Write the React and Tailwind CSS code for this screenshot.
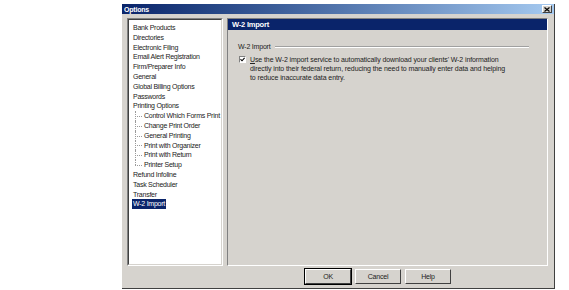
import React from "react";

const items = [
  { label: "Bank Products" },
  { label: "Directories" },
  { label: "Electronic Filing" },
  { label: "Email Alert Registration" },
  { label: "Firm/Preparer Info" },
  { label: "General" },
  { label: "Global Billing Options" },
  { label: "Passwords" },
  { label: "Printing Options" },
  { label: "Control Which Forms Print", child: true },
  { label: "Change Print Order", child: true },
  { label: "General Printing", child: true },
  { label: "Print with Organizer", child: true },
  { label: "Print with Return", child: true },
  { label: "Printer Setup", child: true, last: true },
  { label: "Refund Infoline" },
  { label: "Task Scheduler" },
  { label: "Transfer" },
  { label: "W-2 Import", selected: true },
];

const TreeRow = ({ item }) => {
  if (item.child) {
    return (
      <div className="flex items-center h-[9.8px] whitespace-nowrap">
        <div className="relative w-[11px] h-full shrink-0">
          <div
            className={
              "absolute left-[3px] top-0 border-l border-dotted border-[#9a9a9a] " +
              (item.last ? "h-1/2" : "h-full")
            }
          />
          <div className="absolute left-[3px] top-1/2 w-[7px] border-t border-dotted border-[#9a9a9a]" />
        </div>
        <span className="px-[1px] leading-[9.8px]">{item.label}</span>
      </div>
    );
  }
  return (
    <div className="flex items-center h-[9.8px] whitespace-nowrap">
      <span
        className={
          "px-[1px] leading-[9.8px] " +
          (item.selected ? "bg-[#0a246a] text-white" : "")
        }
      >
        {item.label}
      </span>
    </div>
  );
};

const Button = ({ children, primary }) => (
  <button
    className={
      "w-[46px] h-[15px] bg-[#d6d3ce] text-[7px] tracking-[-0.2px] text-[#222] leading-none border border-t-white border-l-white border-b-[#404040] border-r-[#404040] " +
      (primary ? "outline outline-1 outline-black" : "")
    }
  >
    {children}
  </button>
);

export default function App() {
  return (
    <div
      className="w-[569px] h-[290px] bg-white pt-[4px] pl-[122px]"
      style={{ fontFamily: '"Liberation Sans", Arial, sans-serif' }}
    >
      <div className="w-[433px] h-[285px] flex flex-col bg-[#d6d3ce] border-r border-b border-r-[#404040] border-b-[#404040]">
        {/* title bar */}
        <div className="h-[10px] flex items-center justify-between bg-gradient-to-r from-[#0a246a] to-[#a6caf0] pl-[2px] pr-[2px]">
          <span className="text-white font-bold text-[7px] tracking-[-0.2px] leading-none">Options</span>
          <div className="w-[10px] h-[8px] bg-[#d6d3ce] border border-t-white border-l-white border-b-[#404040] border-r-[#404040] flex items-center justify-center">
            <svg width="6" height="5" viewBox="0 0 6 5">
              <path d="M0.5 0.5 L5.5 4.5 M5.5 0.5 L0.5 4.5" stroke="#000" strokeWidth="1.2" />
            </svg>
          </div>
        </div>

        {/* body */}
        <div className="flex gap-[4px] pt-[4px] pl-[5px] pr-[5px]">
          <div className="w-[96px] h-[248px] bg-white border border-t-[#808080] border-l-[#808080] border-b-white border-r-white">
            <div className="w-full h-full overflow-hidden border border-t-[#404040] border-l-[#404040] border-b-[#d6d3ce] border-r-[#d6d3ce] pt-[3px] pl-[3px] text-[7px] tracking-[-0.25px] text-[#222]">
              {items.map((it) => (
                <TreeRow key={it.label} item={it} />
              ))}
            </div>
          </div>

          <div className="w-[321px] h-[248px] border border-t-[#808080] border-l-[#808080] border-b-white border-r-white">
            <div className="h-[11px] bg-[#0a246a] flex items-center pl-[4px]">
              <span className="text-white font-bold text-[7.5px] tracking-[-0.2px] leading-none">W-2 Import</span>
            </div>
            <div className="pl-[10px] pr-[18px] pt-[13px]">
              <div className="flex items-center gap-[4px]">
                <span className="text-[7px] tracking-[-0.2px] text-[#222] leading-none">W-2 Import</span>
                <div className="flex-1 border-t border-t-[#a0a0a0] border-b border-b-white" />
              </div>
              <div className="flex gap-[4px] mt-[5px] pl-[1px]">
                <div className="w-[7px] h-[7px] mt-[1px] shrink-0 bg-white border border-t-[#808080] border-l-[#808080] border-b-white border-r-white flex items-center justify-center">
                  <svg width="5" height="5" viewBox="0 0 5 5">
                    <path d="M0.5 2.2 L2 3.8 L4.6 0.8" stroke="#000" strokeWidth="1.1" fill="none" />
                  </svg>
                </div>
                <p className="text-[7px] tracking-[-0.1px] leading-[9px] text-[#222] whitespace-nowrap">
                  <span className="underline">U</span>se the W-2 import service to automatically download your clients' W-2 information
                  <br />
                  directly into their federal return, reducing the need to manually enter data and helping
                  <br />
                  to reduce inaccurate data entry.
                </p>
              </div>
            </div>
          </div>
        </div>

        {/* buttons */}
        <div className="flex gap-[4px] pl-[183px] pt-[3px]">
          <Button primary>OK</Button>
          <Button>Cancel</Button>
          <Button>Help</Button>
        </div>
      </div>
    </div>
  );
}
